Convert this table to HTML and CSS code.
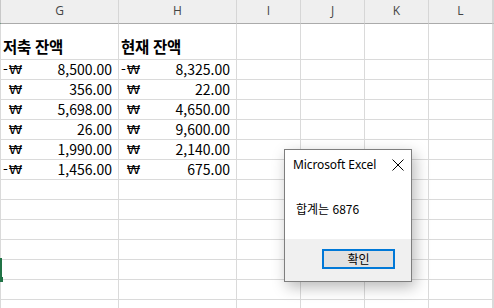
FILE: index.html
```html
<!DOCTYPE html>
<html lang="ko">
<head>
  <meta charset="UTF-8" />
  <meta name="viewport" content="width=device-width, initial-scale=1.0" />
  <title>합계</title>
  <link rel="stylesheet" href="styles.css">
</head>
<body>

  <div class="sheet">
    <!-- column headers -->
    <div class="hd hd-sel"></div>
    <div class="hd">G</div>
    <div class="hd">H</div>
    <div class="hd">I</div>
    <div class="hd">J</div>
    <div class="hd">K</div>
    <div class="hd">L</div>
    <div class="hd"></div>

    <!-- row 1: titles -->
    <div class="c tall"></div>
    <div class="c tall title">저축 잔액</div>
    <div class="c tall title">현재 잔액</div>
    <div class="c tall"></div><div class="c tall"></div><div class="c tall"></div><div class="c tall"></div><div class="c tall"></div>

    <div class="c"></div>
    <div class="c money"><span class="cur"><i>-</i><b>₩</b></span><span>8,500.00</span></div>
    <div class="c money"><span class="cur"><i>-</i><b>₩</b></span><span>8,325.00</span></div>
    <div class="c"></div><div class="c"></div><div class="c"></div><div class="c"></div><div class="c"></div>

    <div class="c"></div>
    <div class="c money"><span class="cur"><i></i><b>₩</b></span><span>356.00</span></div>
    <div class="c money"><span class="cur"><i></i><b>₩</b></span><span>22.00</span></div>
    <div class="c"></div><div class="c"></div><div class="c"></div><div class="c"></div><div class="c"></div>

    <div class="c"></div>
    <div class="c money"><span class="cur"><i></i><b>₩</b></span><span>5,698.00</span></div>
    <div class="c money"><span class="cur"><i></i><b>₩</b></span><span>4,650.00</span></div>
    <div class="c"></div><div class="c"></div><div class="c"></div><div class="c"></div><div class="c"></div>

    <div class="c"></div>
    <div class="c money"><span class="cur"><i></i><b>₩</b></span><span>26.00</span></div>
    <div class="c money"><span class="cur"><i></i><b>₩</b></span><span>9,600.00</span></div>
    <div class="c"></div><div class="c"></div><div class="c"></div><div class="c"></div><div class="c"></div>

    <div class="c"></div>
    <div class="c money"><span class="cur"><i></i><b>₩</b></span><span>1,990.00</span></div>
    <div class="c money"><span class="cur"><i></i><b>₩</b></span><span>2,140.00</span></div>
    <div class="c"></div><div class="c"></div><div class="c"></div><div class="c"></div><div class="c"></div>

    <div class="c"></div>
    <div class="c money"><span class="cur"><i>-</i><b>₩</b></span><span>1,456.00</span></div>
    <div class="c money"><span class="cur"><i></i><b>₩</b></span><span>675.00</span></div>
    <div class="c"></div><div class="c"></div><div class="c"></div><div class="c"></div><div class="c"></div>

    <!-- empty rows -->
    <div class="c"></div><div class="c"></div><div class="c"></div><div class="c"></div><div class="c"></div><div class="c"></div><div class="c"></div><div class="c"></div>
    <div class="c"></div><div class="c"></div><div class="c"></div><div class="c"></div><div class="c"></div><div class="c"></div><div class="c"></div><div class="c"></div>
    <div class="c"></div><div class="c"></div><div class="c"></div><div class="c"></div><div class="c"></div><div class="c"></div><div class="c"></div><div class="c"></div>
    <div class="c"></div><div class="c"></div><div class="c"></div><div class="c"></div><div class="c"></div><div class="c"></div><div class="c"></div><div class="c"></div>
    <div class="c"></div><div class="c"></div><div class="c"></div><div class="c"></div><div class="c"></div><div class="c"></div><div class="c"></div><div class="c"></div>
    <div class="c"></div><div class="c"></div><div class="c"></div><div class="c"></div><div class="c"></div><div class="c"></div><div class="c"></div><div class="c"></div>
    <div class="c"></div><div class="c"></div><div class="c"></div><div class="c"></div><div class="c"></div><div class="c"></div><div class="c"></div><div class="c"></div>

    <!-- active cell edge + fill handle -->
    <div class="sel-edge"></div>
    <div class="sel-handle"></div>
  </div>

  <div class="msgbox">
    <div class="msg-title">
      <span>Microsoft Excel</span>
      <svg class="msg-close" width="12" height="12" viewBox="0 0 12 12">
        <path d="M0.5 0.5 L11.5 11.5 M11.5 0.5 L0.5 11.5" stroke="#000" stroke-width="1" fill="none" />
      </svg>
    </div>
    <div class="msg-body">합계는 6876</div>
    <div class="msg-foot">
      <button class="msg-btn">확인</button>
    </div>
  </div>

</body>
</html>
```

FILE: styles.css
```css
body {
  margin: 0;
  background: #fff;
  font-family: "Noto Sans CJK KR", "Noto Sans", sans-serif;
  overflow: hidden;
}

.sheet {
  position: relative;
  display: grid;
  grid-template-columns: 1px 118px 118px 64px 64px 64px 64px 1fr;
  grid-template-rows: 24px 36px repeat(13, 20px);
  width: 494px;
  height: 308px;
}

.hd {
  box-sizing: border-box;
  background: #efefef;
  border-right: 1px solid #d6d6d6;
  border-bottom: 1px solid #ababab;
  color: #444;
  font-family: "Open Sans", "Noto Sans", sans-serif;
  font-size: 12px;
  line-height: 22px;
  text-align: center;
}

.hd-sel {
  border-right-color: #c8c8c8;
  border-bottom-color: #217346;
}

.c {
  box-sizing: border-box;
  border-right: 1px solid #dadada;
  border-bottom: 1px solid #dadada;
  font-size: 14px;
  line-height: 19px;
  color: #000;
  white-space: nowrap;
  overflow: hidden;
}

.title {
  font-weight: bold;
  font-size: 15.5px;
  padding: 13px 0 0 2px;
  letter-spacing: -0.3px;
}

.money {
  display: flex;
  justify-content: space-between;
  padding: 0 6px 0 2px;
}

/* sign slot + won sign */
.cur {
  display: flex;
}

.cur i {
  font-style: normal;
  width: 6px;
}

.cur b {
  font-weight: normal;
  font-family: "DejaVu Sans", sans-serif;
  font-size: 13px;
  display: inline-block;
  transform: scaleX(1.05);
}

.sel-edge {
  position: absolute;
  left: 0;
  top: 258px;
  width: 2px;
  height: 19px;
  background: #217346;
}

.sel-handle {
  position: absolute;
  left: 0;
  top: 277px;
  width: 3px;
  height: 5px;
  background: #217346;
}

/* message box window */
.msgbox {
  position: absolute;
  left: 284px;
  top: 149px;
  width: 128px;
  height: 133px;
  box-sizing: border-box;
  border: 1px solid #7e7e7e;
  background: #fff;
  display: flex;
  flex-direction: column;
  box-shadow: 3px 5px 14px rgba(0, 0, 0, 0.28);
  font-family: "Noto Sans CJK KR", "Noto Sans", sans-serif;
  font-size: 12px;
  color: #000;
}

.msg-title {
  display: flex;
  justify-content: space-between;
  align-items: center;
  height: 29px;
  padding: 0 7px 0 8px;
}

.msg-title span {
  font-family: "Noto Sans", sans-serif;
  font-size: 12px;
  letter-spacing: -0.1px;
}

.msg-body {
  flex: 1;
  padding: 21px 0 0 11px;
}

.msg-foot {
  height: 42px;
  background: #f0f0f0;
  display: flex;
  justify-content: flex-end;
  align-items: flex-start;
  padding: 10px 16px 0 0;
  box-sizing: border-box;
}

.msg-btn {
  width: 73px;
  height: 20px;
  box-sizing: border-box;
  border: 2px solid #0078d7;
  background: #e1e1e1;
  font-family: "Noto Sans CJK KR", sans-serif;
  font-size: 12px;
  line-height: 14px;
  padding: 0;
  color: #000;
}
```
